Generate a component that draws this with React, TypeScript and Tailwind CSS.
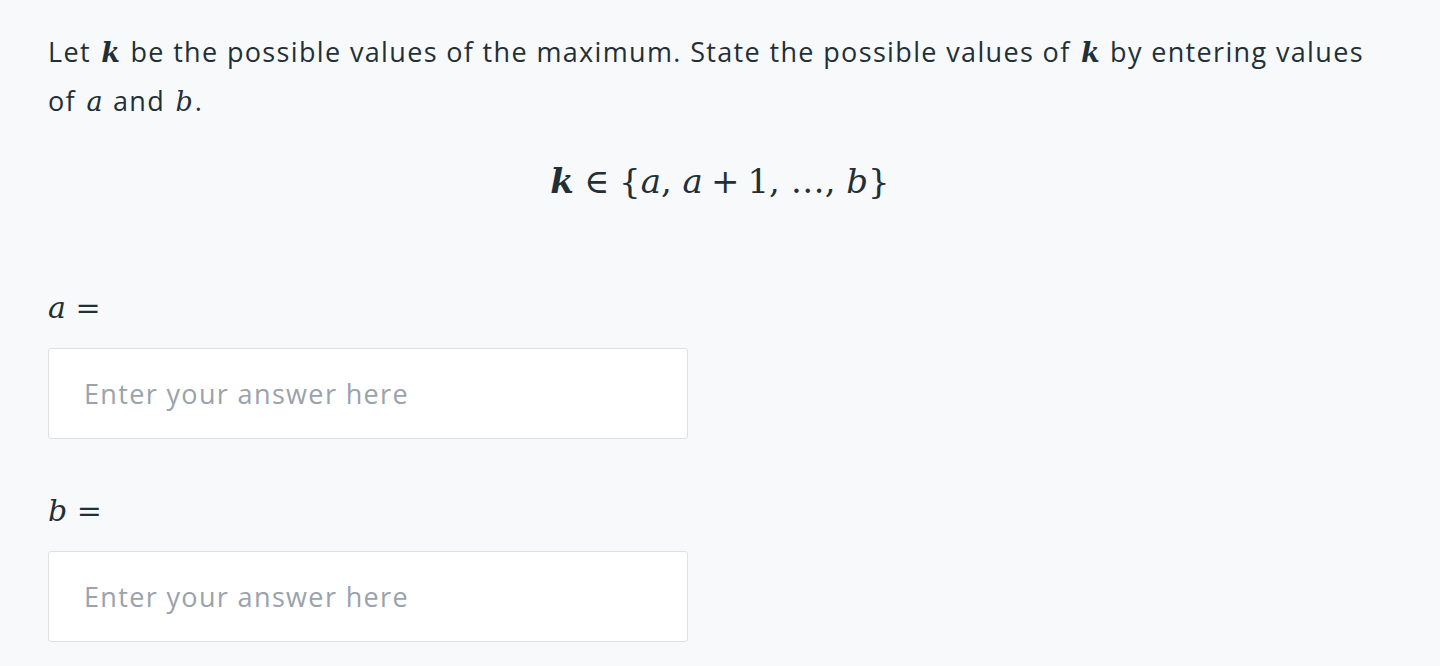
function M({ children, bold = false }: { children: React.ReactNode; bold?: boolean }) {
  return (
    <span
      className={`italic tracking-normal px-[2px] ${bold ? 'font-bold' : 'font-normal'}`}
      style={{ fontFamily: '"DejaVu Serif", "Liberation Serif", serif' }}
    >
      {children}
    </span>
  )
}

function AnswerInput() {
  return (
    <input
      type="text"
      placeholder="Enter your answer here"
      className="w-[640px] h-[91px] bg-white border border-[#dde1e6] rounded-[3px] px-[35px]
        text-[27px] tracking-[0.05em] text-[#21313b] placeholder:text-[#9aa2ab] outline-none"
      style={{ fontFamily: '"Open Sans", Lato, sans-serif' }}
    />
  )
}

export default function App() {
  return (
    <div
      className="w-[1440px] h-[666px] bg-[#f8f9fb] text-[#1f3036] px-12 pt-[28px] overflow-hidden"
      style={{ fontFamily: '"Open Sans", Lato, sans-serif' }}
    >
      {/* Prompt */}
      <p className="text-[27px] leading-[48px] tracking-[0.05em] max-w-[1344px]">
        <span>Let</span> <M bold>k</M>{' '}
        <span>be the possible values of the maximum. State the possible values of</span>{' '}
        <M bold>k</M> <span>by entering values</span>{' '}
        <span>of</span> <M>a</M> <span>and</span> <M>b</M>
        <span>.</span>
      </p>

      {/* Display math */}
      <div className="flex justify-center mt-[35px] text-[34px] leading-[40px]">
        <span style={{ fontFamily: '"DejaVu Serif", "Liberation Serif", serif' }}>
          <span className="italic font-bold">k</span>
          <span className="mx-[10px]">∈</span>
          {'{'}<span className="italic">a</span>,{' '}
          <span className="italic">a</span>
          <span className="mx-[8px]">+</span>
          1, …, <span className="italic">b</span>{'}'}
        </span>
      </div>

      {/* Field a */}
      <div className="mt-[92px] flex flex-col gap-[25px]">
        <p className="text-[30px] leading-[30px]" style={{ fontFamily: '"DejaVu Serif", "Liberation Serif", serif' }}>
          <span className="italic">a</span> <span>=</span>
        </p>
        <AnswerInput />
      </div>

      {/* Field b */}
      <div className="mt-[57px] flex flex-col gap-[25px]">
        <p className="text-[30px] leading-[30px]" style={{ fontFamily: '"DejaVu Serif", "Liberation Serif", serif' }}>
          <span className="italic">b</span> <span>=</span>
        </p>
        <AnswerInput />
      </div>
    </div>
  )
}
